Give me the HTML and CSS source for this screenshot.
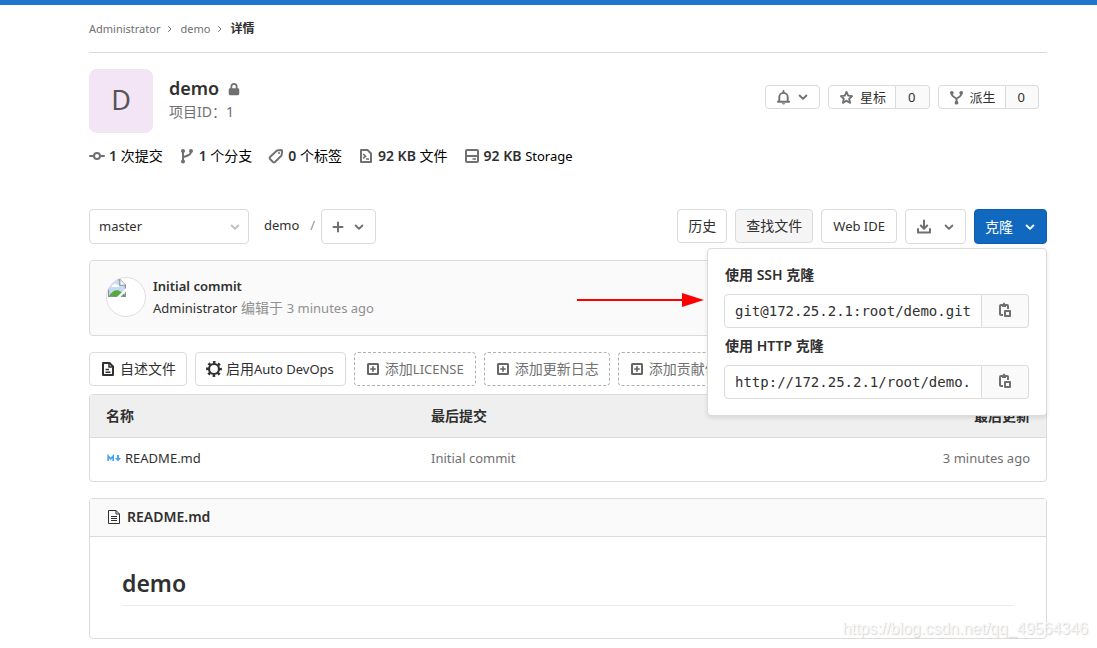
FILE: index.html
```html
<!DOCTYPE html>
<html lang="zh-CN">
<head>
<meta charset="utf-8">
<meta name="viewport" content="width=device-width, initial-scale=1">
<title>demo · 详情</title>
<link rel="stylesheet" href="styles.css">
</head>
<body>
<svg class="sprite" aria-hidden="true">
  <symbol id="chevron" viewBox="0 0 16 16"><path d="M3.500 6l4.500 4.500L12.500 6" fill="none" stroke="currentColor" stroke-width="2.500" stroke-linecap="round" stroke-linejoin="round"/></symbol>
  <symbol id="chevron-right" viewBox="0 0 8 8"><path d="M2.500 1.500L5 4 2.500 6.500" fill="none" stroke="currentColor" stroke-linecap="round" stroke-linejoin="round"/></symbol>
  <symbol id="lock" viewBox="0 0 16 16"><path d="M4 7V5a4 4 0 0 1 8 0v2h.5A1.500 1.500 0 0 1 14 8.500v5a1.500 1.500 0 0 1-1.500 1.500h-9A1.500 1.500 0 0 1 2 13.500v-5A1.500 1.500 0 0 1 3.500 7zm2 0h4V5a2 2 0 0 0-4 0z" fill="currentColor"/></symbol>
  <symbol id="commit" viewBox="0 0 16 16"><g fill="none" stroke="currentColor" stroke-width="2" stroke-linecap="round"><circle cx="8" cy="8" r="3"/><path d="M1 8h4M11 8h4"/></g></symbol>
  <symbol id="branch" viewBox="0 0 16 16"><g fill="none" stroke="currentColor" stroke-width="2"><path d="M4 3v11M4 10c0-2.500 8-1 8-6.500"/></g><g fill="currentColor"><circle cx="4" cy="3" r="2"/><circle cx="12" cy="3" r="2"/><circle cx="4" cy="13.500" r="2"/></g></symbol>
  <symbol id="tag" viewBox="0 0 16 16"><path d="M9 2.500L13 2q1.200 0 1.200 1.200L13.500 7.500 7 14q-1 .8-2 0L2 11q-.8-1 0-2z" fill="none" stroke="currentColor" stroke-width="1.900" stroke-linejoin="round"/><circle cx="11" cy="5" r="1" fill="currentColor"/></symbol>
  <symbol id="code-file" viewBox="0 0 16 16"><path d="M3 2h6.500L13 5.500V14H3z" fill="none" stroke="currentColor" stroke-width="2" stroke-linejoin="round"/><path d="M5.200 6l2.300 2.200-2.300 2.200M8 11h3" fill="none" stroke="currentColor" stroke-width="1.700"/></symbol>
  <symbol id="disk" viewBox="0 0 16 16"><rect x="2" y="2" width="12" height="12" rx="1" fill="none" stroke="currentColor" stroke-width="2"/><path d="M2 8h12" stroke="currentColor" stroke-width="2"/><path d="M8.500 11H12" stroke="currentColor" stroke-width="1.500"/></symbol>
  <symbol id="bell" viewBox="0 0 16 16"><path d="M3.500 12V7.500a4.500 4.500 0 0 1 9 0V12M2 12.500h12" fill="none" stroke="currentColor" stroke-width="2" stroke-linecap="round"/><path d="M8 1v2" stroke="currentColor" stroke-width="2" stroke-linecap="round"/><path d="M6 14h4q-2 3-4 0z" fill="currentColor"/></symbol>
  <symbol id="star" viewBox="0 0 16 16"><path d="M8 2l1.800 4 4.200.5-3.100 2.800.9 4.400L8 11.500l-3.800 2.200.9-4.400L2 6.500 6.200 6z" fill="none" stroke="currentColor" stroke-width="2" stroke-linejoin="round"/></symbol>
  <symbol id="fork" viewBox="0 0 16 16"><path d="M3 3v1.500q0 2 2.500 3Q8 8.500 8 10v4M13 3v1.500q0 2-2.500 3Q8 8.500 8 10" fill="none" stroke="currentColor" stroke-width="2"/><g fill="currentColor"><circle cx="3" cy="3" r="2"/><circle cx="13" cy="3" r="2"/><circle cx="8" cy="13.500" r="2"/></g></symbol>
  <symbol id="plus" viewBox="0 0 12 12"><path d="M6 1.500v9M1.500 6h9" stroke="currentColor" stroke-width="2" stroke-linecap="round"/></symbol>
  <symbol id="download" viewBox="0 0 16 16"><path d="M8 1.500v8M4.800 6.500L8 9.700l3.200-3.200M2 10v3.500h12V10" fill="none" stroke="currentColor" stroke-width="2" stroke-linecap="round" stroke-linejoin="round"/></symbol>
  <symbol id="paste" viewBox="0 0 16 16"><path d="M6 13H4q-1 0-1-1V4q0-1 1-1h6q1 0 1 1v3" fill="none" stroke="currentColor" stroke-width="2"/><path d="M5 5V2h.800Q6 .5 7 .5T8.200 2H9v3z" fill="currentColor"/><rect x="8" y="9" width="5" height="5" fill="none" stroke="currentColor" stroke-width="2" stroke-linejoin="round"/></symbol>
  <symbol id="doc" viewBox="0 0 16 16"><path d="M3 2h6.500L13 5.500V14H3z" fill="none" stroke="currentColor" stroke-width="2" stroke-linejoin="round"/><path d="M9 2v4h4M5.500 8.500H9M5.500 11.200h5" fill="none" stroke="currentColor" stroke-width="1.500"/></symbol>
  <symbol id="gear" viewBox="0 0 16 16"><circle cx="8" cy="8" r="5" fill="none" stroke="currentColor" stroke-width="2.200"/><circle cx="8" cy="8" r="6.700" fill="none" stroke="currentColor" stroke-width="2.400" stroke-dasharray="2.630 2.630" stroke-dashoffset="1.300"/></symbol>
  <symbol id="plus-square" viewBox="0 0 16 16"><rect x="3" y="3" width="10" height="10" rx=".5" fill="none" stroke="currentColor" stroke-width="2"/><path d="M8 5.200v5.600M5.200 8h5.600" stroke="currentColor" stroke-width="1.700"/></symbol>
  <symbol id="markdown" viewBox="0 0 16 16"><path d="M2.200 11V6l2.500 3 2.500-3v5" fill="none" stroke="currentColor" stroke-width="1.700"/><path d="M11 5h2v3h2l-3 3.500L9 8h2z" fill="currentColor"/></symbol>
  <symbol id="page" viewBox="0 0 14 16"><path d="M1.500 1.500h7.500L12.500 5v9.500h-11zM9 1.500V5h3.500M4 7.500h6M4 9.500h6M4 11.500h6" fill="none" stroke="currentColor"/></symbol>
</svg>

<div class="topbar"></div>
<div class="container">
  <nav class="breadcrumbs" aria-label="Breadcrumb">
    <a href="#">Administrator</a>
    <svg class="sep"><use href="#chevron-right"/></svg>
    <a href="#">demo</a>
    <svg class="sep"><use href="#chevron-right"/></svg>
    <strong>详情</strong>
  </nav>

  <header class="project">
    <div class="avatar">D</div>
    <div class="project-title">
      <h1>demo <svg class="icon"><use href="#lock"/></svg></h1>
      <p>项目ID：1</p>
    </div>
    <div class="project-actions">
      <button class="small-btn" aria-label="通知"><svg class="icon"><use href="#bell"/></svg><svg class="icon caret"><use href="#chevron"/></svg></button>
      <div class="count-group">
        <button class="small-btn"><svg class="icon"><use href="#star"/></svg>星标</button>
        <a class="count" href="#">0</a>
      </div>
      <div class="count-group">
        <button class="small-btn"><svg class="icon"><use href="#fork"/></svg>派生</button>
        <a class="count" href="#">0</a>
      </div>
    </div>
  </header>

  <nav class="stats" aria-label="统计">
    <a href="#"><svg class="icon"><use href="#commit"/></svg><span><strong>1</strong> 次提交</span></a>
    <a href="#"><svg class="icon"><use href="#branch"/></svg><span><strong>1</strong> 个分支</span></a>
    <a href="#"><svg class="icon"><use href="#tag"/></svg><span><strong>0</strong> 个标签</span></a>
    <a href="#"><svg class="icon"><use href="#code-file"/></svg><span><strong>92 KB</strong> 文件</span></a>
    <a href="#"><svg class="icon"><use href="#disk"/></svg><span><strong>92 KB</strong> <span class="latin">Storage</span></span></a>
  </nav>

  <div class="tree-controls">
    <div class="ref-select">
      <select class="latin" aria-label="分支"><option>master</option></select>
      <svg class="icon"><use href="#chevron"/></svg>
    </div>
    <a class="path latin" href="#">demo</a>
    <span class="slash latin">/</span>
    <button class="btn add" aria-label="添加"><svg class="icon"><use href="#plus"/></svg><svg class="icon caret"><use href="#chevron"/></svg></button>
    <div class="tree-actions">
      <button class="btn">历史</button>
      <button class="btn active">查找文件</button>
      <button class="btn ide latin">Web IDE</button>
      <button class="btn download" aria-label="下载"><svg class="icon"><use href="#download"/></svg><svg class="icon caret"><use href="#chevron"/></svg></button>
      <div class="clone">
        <button class="btn primary">克隆<svg class="icon caret"><use href="#chevron"/></svg></button>
        <div class="clone-menu">
          <label for="ssh">使用 SSH 克隆</label>
          <div class="input-group">
            <input id="ssh" type="text" readonly value="git@172.25.2.1:root/demo.git">
            <button aria-label="复制 SSH"><svg class="icon"><use href="#paste"/></svg></button>
          </div>
          <label for="http">使用 HTTP 克隆</label>
          <div class="input-group">
            <input id="http" type="text" readonly value="http://172.25.2.1/root/demo.git">
            <button aria-label="复制 HTTP"><svg class="icon"><use href="#paste"/></svg></button>
          </div>
        </div>
      </div>
    </div>
  </div>

  <section class="commit">
    <div class="user-avatar">
      <svg viewBox="0 0 16 16"><path d="M.5.5h10l5 5v10H.5z" fill="#c6d9f7" stroke="#8a8f94"/><path d="M10.500.5v5h5" fill="#fff" stroke="#8a8f94"/><path d="M3 7q0-2 2-2 1-2 3 0 2 0 2 2z" fill="#fff"/><path d="M1 15q3-5 7-5 3 0 7 4v1z" fill="#55aa3c"/><path d="M8 16l8-8v3l-5 5z" fill="#fff"/></svg>
    </div>
    <div class="commit-text">
      <a class="commit-title latin" href="#">Initial commit</a>
      <p><a class="latin" href="#">Administrator</a> 编辑于 <span class="latin">3 minutes ago</span></p>
    </div>
    <svg class="arrow" viewBox="0 0 128 14"><path d="M0 7h108" stroke="#f00" stroke-width="2"/><path d="M105 0l22 7-22 7z" fill="#f00"/></svg>
  </section>

  <div class="quick-actions">
    <button class="btn"><svg class="icon"><use href="#doc"/></svg><span>自述文件</span></button>
    <button class="btn mixed"><svg class="icon"><use href="#gear"/></svg><span>启用<span class="latin">Auto DevOps</span></span></button>
    <button class="btn dashed mixed"><svg class="icon"><use href="#plus-square"/></svg><span>添加<span class="latin">LICENSE</span></span></button>
    <button class="btn dashed"><svg class="icon"><use href="#plus-square"/></svg><span>添加更新日志</span></button>
    <button class="btn dashed"><svg class="icon"><use href="#plus-square"/></svg><span>添加贡献信息</span></button>
  </div>

  <div class="files">
    <table>
      <thead><tr><th class="name">名称</th><th>最后提交</th><th class="time">最后更新</th></tr></thead>
      <tbody class="latin"><tr><td class="name"><a href="#"><svg class="icon"><use href="#markdown"/></svg>README.md</a></td><td>Initial commit</td><td class="time">3 minutes ago</td></tr></tbody>
    </table>
  </div>

  <article class="readme">
    <div class="readme-title"><svg class="page-icon"><use href="#page"/></svg><a href="#">README.md</a></div>
    <div class="readme-body"><h2>demo</h2></div>
  </article>
</div>
<div class="watermark">https://blog.csdn.net/qq_49564346</div>
</body>
</html>
```
FILE: styles.css
```css
* { box-sizing: border-box; }
body {
  margin: 0;
  position: relative;
  background: #fff;
  color: #303030;
  font: 14px/20px "Noto Sans", "Noto Sans CJK SC", sans-serif;
}
a { color: inherit; text-decoration: none; }
p, h1, h2 { margin: 0; }
strong, label, th { font-weight: 600; }
button, select, input { font: inherit; color: inherit; margin: 0; }
button { cursor: pointer; }
.latin { font-size: 13px; }
.sprite { display: none; }
.icon { width: 16px; height: 16px; flex: none; color: #707070; }
.icon.caret { width: 12px; height: 12px; }
.topbar { height: 5px; background: #1f75cb; }
.container { padding: 0 50px 0 89px; }

.breadcrumbs {
  display: flex;
  align-items: center;
  gap: 6px;
  height: 48px;
  border-bottom: 1px solid #dbdbdb;
  color: #707070;
  font-size: 11px;
}
.breadcrumbs strong { color: #303030; font-size: 12px; }
.sep { width: 8px; height: 8px; }

.project { display: flex; align-items: flex-start; padding: 16px 8px 0 0; }
.avatar {
  width: 64px;
  height: 64px;
  margin-right: 16px;
  border: 1px solid #efe6f1;
  border-radius: 8px;
  background: #f3e5f5;
  color: #555;
  font-size: 27px;
  line-height: 60px;
  text-align: center;
}
.project-title h1 { display: flex; align-items: center; gap: 8px; margin-top: 7px; font-size: 18px; line-height: 24px; font-weight: 600; }
.project-title .icon { width: 14px; height: 14px; margin-top: 2px; }
.project-title p { color: #707070; line-height: 24px; }
.project-actions { display: flex; gap: 8px; margin: 16px 0 0 auto; }
.small-btn, .count {
  display: flex;
  align-items: center;
  height: 24px;
  border: 1px solid #dbdbdb;
  border-radius: 4px;
  background: #fff;
  padding: 0 10px;
  font-size: 13px;
  line-height: 22px;
}
.small-btn { gap: 6px; }
.count-group { display: flex; }
.count-group .small-btn { border-radius: 4px 0 0 4px; padding: 0 9px 0 10px; }
.count { border-left: 0; border-radius: 0 4px 4px 0; background: #fafafa; padding: 0 13px 0 12px; }
.small-btn .icon { width: 15px; height: 15px; }
.small-btn .caret { width: 12px; height: 12px; }

.stats { display: flex; gap: 16px; margin-top: 13px; color: #000; }
.stats a { display: flex; align-items: center; gap: 4px; }
.stats strong { color: #303030; }

.tree-controls { display: flex; align-items: flex-start; margin-top: 43px; }
.ref-select { position: relative; width: 160px; }
.ref-select select {
  display: block;
  width: 100%;
  height: 35px;
  padding: 0 9px 1px;
  border: 1px solid #dbdbdb;
  border-radius: 4px;
  background: #fff;
  appearance: none;
}
.ref-select .icon { position: absolute; right: 8px; top: 12px; width: 12px; height: 12px; color: #bfbfbf; }
.path { margin-left: 15px; line-height: 32px; }
.slash { margin: 0 6px 0 11px; color: #909090; line-height: 32px; }
.btn {
  display: flex;
  align-items: center;
  height: 34px;
  padding: 0 10px;
  border: 1px solid #dbdbdb;
  border-radius: 4px;
  background: #fff;
  white-space: nowrap;
}
.btn.active { background: #f5f5f5; }
.btn.ide { padding: 0 11px; }
.add, .download, .primary { height: 35px; }
.add { gap: 9px; }
.add .icon { width: 12px; height: 12px; }
.download { gap: 11px; }
.primary { gap: 11px; background: #1068bf; border-color: #0f5ead; color: #fff; }
.primary .icon { color: #fff; }
.tree-actions { display: flex; gap: 8px; margin-left: auto; }
.clone { position: relative; }
.clone-menu {
  position: absolute;
  z-index: 2;
  top: 39px;
  right: 0;
  width: 340px;
  padding: 16px 17px;
  border: 1px solid #dbdbdb;
  border-radius: 4px;
  background: #fff;
  box-shadow: 0 2px 4px rgba(0, 0, 0, .1);
}
.clone-menu label { display: block; margin-bottom: 9px; }
.input-group { display: flex; margin: 0 0 8px -1px; }
.input-group:last-child { margin-bottom: 0; }
.input-group input {
  flex: 1;
  min-width: 0;
  height: 34px;
  padding: 0 10px;
  border: 1px solid #dbdbdb;
  border-radius: 4px 0 0 4px;
  font-family: "DejaVu Sans Mono", monospace;
}
.input-group button {
  display: flex;
  align-items: center;
  justify-content: center;
  width: 47px;
  padding: 0 0 2px;
  border: 1px solid #dbdbdb;
  border-left: 0;
  border-radius: 0 4px 4px 0;
  background: #fafafa;
}

.commit {
  position: relative;
  display: flex;
  align-items: center;
  height: 76px;
  margin-top: 16px;
  padding: 0 16px 2px;
  border: 1px solid #dbdbdb;
  border-radius: 4px;
  background: #fafafa;
}
.user-avatar {
  width: 40px;
  height: 40px;
  margin-right: 7px;
  overflow: hidden;
  border: 1px solid #dfdfdf;
  border-radius: 50%;
  background: #fff;
}
.user-avatar svg { display: block; width: 18px; height: 18px; margin: 1px; }
.commit-title { font-weight: 600; }
.commit p { color: #909090; }
.commit p a { color: #303030; }
.commit-text { line-height: 21px; }
.arrow { position: absolute; right: 341px; top: 32px; width: 128px; height: 14px; }

.quick-actions { display: flex; gap: 8px; margin: 16px 0 8px; overflow: hidden; }
.quick-actions .btn { gap: 4px; padding-bottom: 1px; }
.quick-actions .mixed { padding-right: 11px; }
.quick-actions .icon { color: #303030; }
.quick-actions .dashed { border: 1px dashed #b0b0b0; color: #707070; }
.quick-actions .dashed .icon { color: #666; }

.files { border: 1px solid #dbdbdb; border-radius: 4px; overflow: hidden; }
.files table { width: 100%; border-collapse: collapse; table-layout: fixed; }
.files th { height: 42px; padding: 0 16px; border-bottom: 1px solid #dbdbdb; background: #efefef; text-align: left; }
.files td { height: 44px; padding: 0 16px 2px; color: #707070; }
.files .name { width: 34%; }
.files .time { text-align: right; }
.files a { display: flex; align-items: center; gap: 3px; color: #303030; }
.files .icon { color: #42a5f5; }

.readme { margin-top: 16px; border: 1px solid #dbdbdb; border-radius: 4px; }
.readme-title { display: flex; align-items: center; gap: 6px; height: 38px; padding: 0 17px 1px; border-bottom: 1px solid #dbdbdb; background: #fafafa; font-weight: 600; }
.page-icon { width: 14px; height: 16px; }
.readme-body { padding: 30px 32px 32px; }
.readme-body h2 { padding-bottom: 6px; border-bottom: 1px solid #eaeaea; font-size: 23px; line-height: 32px; font-weight: 600; }
.watermark {
  position: absolute;
  right: 9px;
  bottom: 0;
  color: #f8f8f8;
  font: 16px/20px "Liberation Sans", sans-serif;
  text-shadow: 1px 1px 1px #d4d4d4;
}
```
